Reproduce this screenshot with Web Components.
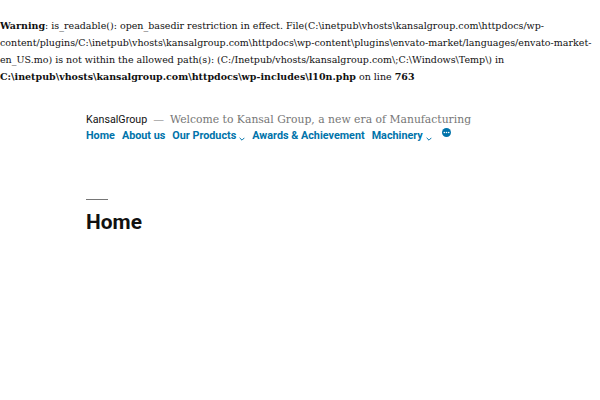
<!DOCTYPE html>
<html>
<head>
<meta charset="utf-8">
<title>Home</title>
<style>
  html, body { margin: 0; padding: 0; background: #fff; }
  body { font-family: "DejaVu Serif", serif; color: #111; }
</style>
</head>
<body>
<php-warning>
  <b>Warning</b>: is_readable(): open_basedir restriction in effect. File(C:\inetpub\vhosts\kansalgroup.com\httpdocs/wp-content/plugins/C:\inetpub\vhosts\kansalgroup.com\httpdocs\wp-content\plugins\envato-market/languages/envato-market-en_US.mo) is not within the allowed path(s): (C:/Inetpub/vhosts/kansalgroup.com\;C:\Windows\Temp\) in <b>C:\inetpub\vhosts\kansalgroup.com\httpdocs\wp-includes\l10n.php</b> on line <b>763</b>
</php-warning>
<site-header title="KansalGroup" description="Welcome to Kansal Group, a new era of Manufacturing">
  <nav-link>Home</nav-link>
  <nav-link>About us</nav-link>
  <nav-link has-sub>Our Products</nav-link>
  <nav-link>Awards &amp; Achievement</nav-link>
  <nav-link has-sub>Machinery</nav-link>
  <more-button></more-button>
</site-header>
<page-title>Home</page-title>

<script>
// php warning printed above the page
class PhpWarning extends HTMLElement {
  constructor() {
    super();
    const shadowRoot = this.attachShadow({ mode: "open" });
    shadowRoot.innerHTML = `
      <style>
        :host {
          display: block;
          padding-top: 17px;
          font-family: "DejaVu Serif", serif;
          font-size: 9.5px;
          line-height: 17px;
          color: #111;
          overflow-wrap: break-word;
        }
      </style>
      <slot></slot>
    `;
  }
}
customElements.define("php-warning", PhpWarning);

class SiteHeader extends HTMLElement {
  constructor() {
    super();
    const shadowRoot = this.attachShadow({ mode: "open" });
    shadowRoot.innerHTML = `
      <style>
        :host {
          display: block;
          padding: 26px 0 0 86px;
        }
        .branding {
          display: flex;
          align-items: baseline;
          line-height: 17px;
          white-space: nowrap;
        }
        .title {
          font-family: Roboto, sans-serif;
          font-size: 10.7px;
          color: #111;
        }
        .dash {
          font-family: "DejaVu Serif", serif;
          font-size: 10.8px;
          color: #767676;
          margin: 0 6px 0 6px;
        }
        .description {
          font-family: "DejaVu Serif", serif;
          font-size: 10.8px;
          color: #767676;
        }
        nav {
          display: flex;
          align-items: flex-start;
          gap: 7px;
          line-height: 16px;
          white-space: nowrap;
        }
      </style>
      <div class="branding">
        <span class="title"></span><span class="dash">—</span><span class="description"></span>
      </div>
      <nav><slot></slot></nav>
    `;
    shadowRoot.querySelector(".title").textContent = this.getAttribute("title");
    shadowRoot.querySelector(".description").textContent = this.getAttribute("description");
  }
}
customElements.define("site-header", SiteHeader);

class NavLink extends HTMLElement {
  constructor() {
    super();
    const shadowRoot = this.attachShadow({ mode: "open" });
    const arrow = this.hasAttribute("has-sub")
      ? `<svg width="6" height="4" viewBox="0 0 6 4"><path d="M.6.8 3 3.2 5.4.8" fill="none" stroke="#0073aa" stroke-width="1"/></svg>`
      : "";
    shadowRoot.innerHTML = `
      <style>
        :host {
          display: inline-flex;
          font-family: Roboto, sans-serif;
          font-size: 10.8px;
          font-weight: 700;
          color: #0073aa;
        }
        svg {
          margin: 9px 0 0 3px;
        }
      </style>
      <slot></slot>${arrow}
    `;
  }
}
customElements.define("nav-link", NavLink);

class MoreButton extends HTMLElement {
  constructor() {
    super();
    const shadowRoot = this.attachShadow({ mode: "open" });
    shadowRoot.innerHTML = `
      <style>
        :host {
          display: block;
          width: 9px;
          height: 9px;
          margin: 0 0 0 3px;
        }
        svg { display: block; }
      </style>
      <svg width="9" height="9" viewBox="0 0 9 9">
        <circle cx="4.5" cy="4.5" r="4.5" fill="#0073aa"/>
        <circle cx="2.3" cy="4.5" r=".8" fill="#fff"/>
        <circle cx="4.5" cy="4.5" r=".8" fill="#fff"/>
        <circle cx="6.7" cy="4.5" r=".8" fill="#fff"/>
      </svg>
    `;
  }
}
customElements.define("more-button", MoreButton);

class PageTitle extends HTMLElement {
  constructor() {
    super();
    const shadowRoot = this.attachShadow({ mode: "open" });
    shadowRoot.innerHTML = `
      <style>
        :host {
          display: block;
          padding: 55px 0 0 86px;
        }
        .rule {
          width: 22px;
          height: 1px;
          background: #767676;
          margin-bottom: 9px;
        }
        h1 {
          margin: 0;
          font-family: Roboto, sans-serif;
          font-size: 20.9px;
          font-weight: 700;
          line-height: 26px;
          color: #111;
        }
      </style>
      <div class="rule"></div>
      <h1><slot></slot></h1>
    `;
  }
}
customElements.define("page-title", PageTitle);
</script>
</body>
</html>
